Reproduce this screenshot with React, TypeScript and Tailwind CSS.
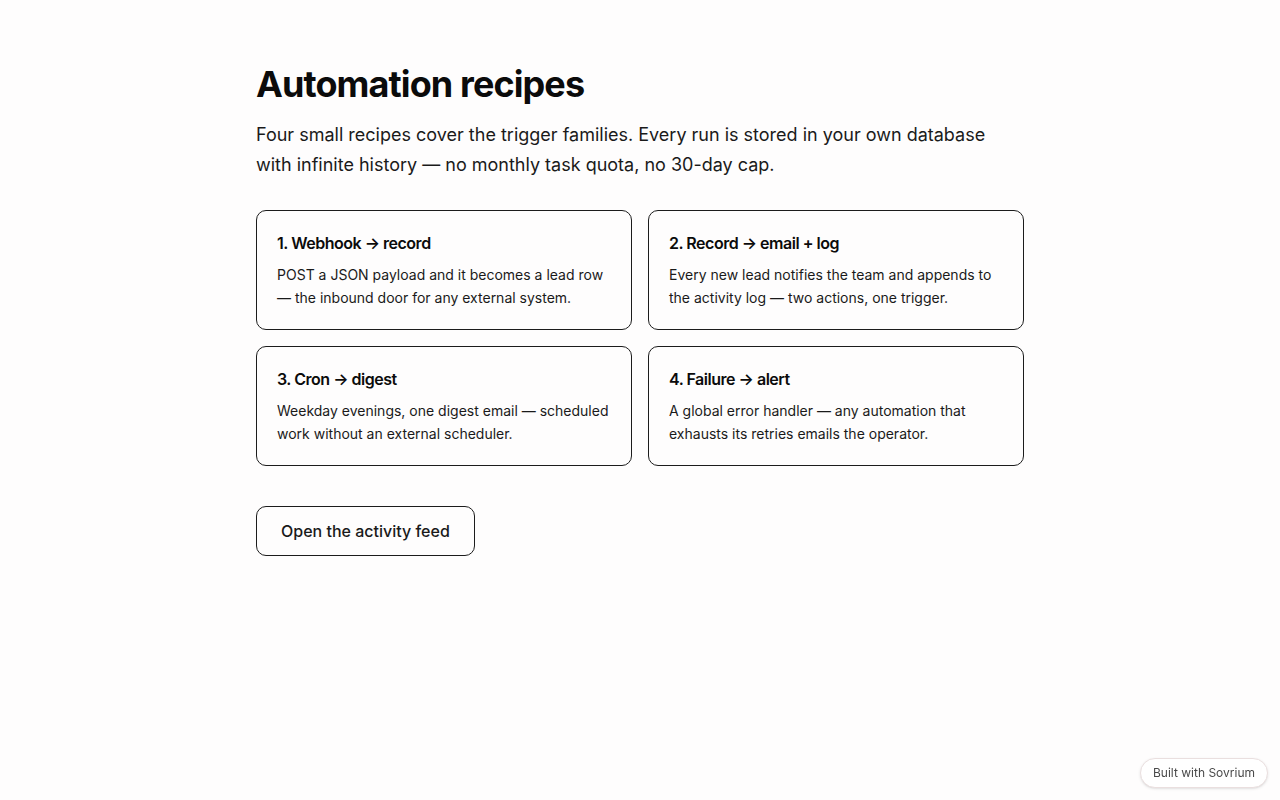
const recipes = [
	{
		title: "1. Webhook → record",
		body: "POST a JSON payload and it becomes a lead row — the inbound door for any external system.",
	},
	{
		title: "2. Record → email + log",
		body: "Every new lead notifies the team and appends to the activity log — two actions, one trigger.",
	},
	{
		title: "3. Cron → digest",
		body: "Weekday evenings, one digest email — scheduled work without an external scheduler.",
	},
	{
		title: "4. Failure → alert",
		body: "A global error handler — any automation that exhausts its retries emails the operator.",
	},
];

function RecipeCard({ title, body }: { title: string; body: string }) {
	return (
		<div className="rounded-[10px] border border-[#1c1c1c] px-5 pt-5 pb-5">
			<h3 className="text-base leading-6 font-semibold tracking-[-0.03em] text-[#0b0b0b]">{title}</h3>
			<p className="mt-2 text-sm leading-[23px] text-[#1a1a1a]">{body}</p>
		</div>
	);
}

export default function App() {
	return (
		<div className="min-h-screen bg-[#fefdfd] font-['Inter',sans-serif] text-[#0b0b0b]">
			<main className="mx-auto max-w-3xl pt-16">
				<h1 className="text-4xl leading-10 font-bold tracking-[-0.025em]">Automation recipes</h1>
				<p className="mt-4 text-lg leading-[30px] text-[#1a1a1a]">
					Four small recipes cover the trigger families. Every run is stored in your own database with infinite
					history — no monthly task quota, no 30-day cap.
				</p>
				<div className="mt-[30px] grid grid-cols-2 gap-4">
					{recipes.map((r) => (
						<RecipeCard key={r.title} title={r.title} body={r.body} />
					))}
				</div>
				<button className="mt-10 rounded-[10px] border border-[#1c1c1c] px-6 py-3 text-base leading-6 font-medium text-[#1a1a1a]">
					Open the activity feed
				</button>
			</main>
			<div className="fixed right-3 bottom-3 rounded-full border border-[#eadfdf] bg-white px-3 py-[6px] text-xs leading-4 text-[#4a4a4a] shadow-sm">
				Built with Sovrium
			</div>
		</div>
	);
}
